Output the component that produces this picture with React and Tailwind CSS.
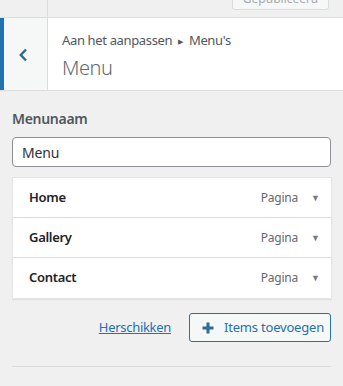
import React from 'react';

const items = [
    { title: 'Home', type: 'Pagina' },
    { title: 'Gallery', type: 'Pagina' },
    { title: 'Contact', type: 'Pagina' },
];

const MenuItem = ({ title, type, last }) => (
    <div className={`flex items-center h-[40px] pl-[16px] pr-[11px] bg-white ${last ? '' : 'border-b border-[#dcdcde]'}`}>
        <span className="flex-1 text-[13px] font-semibold tracking-[-0.3px] text-[#1d2327]">{title}</span>
        <span className="text-[12px] tracking-[-0.2px] text-[#646970]">{type}</span>
        <span className="ml-[13px] text-[9px] text-[#787c82]">▼</span>
    </div>
);

const App = () => {
    return (
        <div className="w-[343px] h-[386px] overflow-hidden bg-[#f0f0f1] text-[#50575e]" style={{ fontFamily: '"Noto Sans", "Open Sans", sans-serif' }}>
            {/* top bar */}
            <div className="flex h-[18px] border-b border-[#dcdcde]">
                <div className="w-[48px] border-r border-[#dcdcde]" />
                <div className="flex-1 flex justify-end pr-[14px]">
                    <div className="w-[97px] h-[28px] -mt-[18px] rounded-[3px] border border-[#dcdcde] bg-[#f6f7f7] text-[12px] text-[#a7aaad] flex items-end justify-center pb-[1px]">
                        Gepubliceerd
                    </div>
                </div>
            </div>

            {/* section header */}
            <div className="flex h-[73px] bg-white border-b border-[#dcdcde]">
                <div className="w-[48px] flex border-r border-[#dcdcde] bg-[#f6f7f7]">
                    <div className="w-[4px] bg-[#2271b1]" />
                    <div className="flex-1 flex items-center justify-center pr-[5px]">
                        <svg width="10" height="14" viewBox="0 0 10 14" className="mt-[1px]">
                            <path d="M8 1.5 L2.8 7 L8 12.5" fill="none" stroke="#2c6a98" strokeWidth="2.4" />
                        </svg>
                    </div>
                </div>
                <div className="flex-1 pl-[14px] pt-[12px]">
                    <div className="text-[13px] leading-[20px] tracking-[-0.35px] text-[#50575e]">
                        Aan het aanpassen <span className="text-[7px] align-middle mx-[3px]">▶</span> Menu's
                    </div>
                    <div className="mt-[3px] text-[20px] leading-[26px] font-light tracking-[-0.5px] text-[#646970]">Menu</div>
                </div>
            </div>

            {/* body */}
            <div className="px-[12px] pt-[18px]">
                <div className="text-[14px] font-semibold tracking-[-0.3px] text-[#50575e] leading-[20px]">Menunaam</div>
                <div className="mt-[8px] h-[30px] rounded-[4px] border border-[#8c8f94] bg-white flex items-center pl-[9px] text-[14px] tracking-[-0.2px] text-[#2c3338]">
                    Menu
                </div>

                <div className="mt-[10px] w-[320px] border border-[#e4e4e4] shadow-[0_1px_1px_rgba(0,0,0,0.06)]">
                    {items.map((it, i) => (
                        <MenuItem key={it.title} {...it} last={i === items.length - 1} />
                    ))}
                </div>

                <div className="mt-[14px] flex items-center justify-end gap-[18px]">
                    <a href="#" className="text-[13px] tracking-[-0.3px] text-[#2271b1] underline">Herschikken</a>
                    <button className="h-[29px] w-[142px] rounded-[3px] border border-[#2271b1] bg-[#f6f7f7] flex items-center pl-[11px] text-[13px] tracking-[-0.2px] text-[#2271b1]">
                        <svg width="14" height="14" viewBox="0 0 14 14" className="mr-[9px]">
                            <path d="M7 1.5 V12.5 M1.5 7 H12.5" stroke="#2c6a98" strokeWidth="3" />
                        </svg>
                        Items toevoegen
                    </button>
                </div>

                <div className="mt-[24px] h-px bg-[#dcdcde]" />
            </div>
        </div>
    );
};

export default App;
